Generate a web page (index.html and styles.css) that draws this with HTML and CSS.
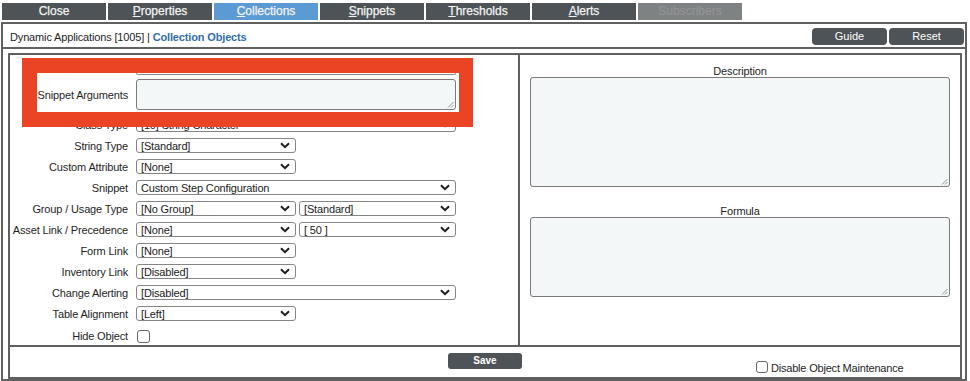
FILE: index.html
```html
<!DOCTYPE html>
<html lang="en">
<head>
<meta charset="utf-8">
<title>Collection Objects</title>
<link rel="stylesheet" href="styles.css">
</head>
<body>
<nav class="tabs">
  <div class="tab">Close</div>
  <div class="tab"><u>P</u>roperties</div>
  <div class="tab tab-active"><u>C</u>ollections</div>
  <div class="tab"><u>S</u>nippets</div>
  <div class="tab"><u>T</u>hresholds</div>
  <div class="tab"><u>A</u>lerts</div>
  <div class="tab tab-disabled">Subscribers</div>
</nav>
<section class="panel">
  <header class="panel-head">
    <div class="crumb">Dynamic Applications [1005] | <span class="crumb-strong">Collection Objects</span></div>
    <div class="head-btns">
      <div class="btn">Guide</div>
      <div class="btn">Reset</div>
    </div>
  </header>
  <div class="table">
    <div class="main">
      <div class="col-left">
        <div class="row"><span class="lbl"></span><div class="sel sel-long"></div></div>
        <div class="row"><span class="lbl"></span><div class="sel sel-long"></div></div>
        <div class="row"><span class="lbl">Class Type</span><div class="sel sel-long"><span>[10] String Character</span><svg class="chev" width="10" height="7" viewBox="0 0 10 7"><path d="M1 1.2 L5 5.2 L9 1.2" fill="none" stroke="#1d1d1d" stroke-width="2"/></svg></div></div>
        <div class="row"><span class="lbl">String Type</span><div class="sel sel-short"><span>[Standard]</span><svg class="chev" width="10" height="7" viewBox="0 0 10 7"><path d="M1 1.2 L5 5.2 L9 1.2" fill="none" stroke="#1d1d1d" stroke-width="2"/></svg></div></div>
        <div class="row"><span class="lbl">Custom Attribute</span><div class="sel sel-short"><span>[None]</span><svg class="chev" width="10" height="7" viewBox="0 0 10 7"><path d="M1 1.2 L5 5.2 L9 1.2" fill="none" stroke="#1d1d1d" stroke-width="2"/></svg></div></div>
        <div class="row"><span class="lbl">Snippet</span><div class="sel sel-long"><span>Custom Step Configuration</span><svg class="chev" width="10" height="7" viewBox="0 0 10 7"><path d="M1 1.2 L5 5.2 L9 1.2" fill="none" stroke="#1d1d1d" stroke-width="2"/></svg></div></div>
        <div class="row"><span class="lbl">Group / Usage Type</span><div class="sel sel-short"><span>[No Group]</span><svg class="chev" width="10" height="7" viewBox="0 0 10 7"><path d="M1 1.2 L5 5.2 L9 1.2" fill="none" stroke="#1d1d1d" stroke-width="2"/></svg></div><div class="sel sel-pair"><span>[Standard]</span><svg class="chev" width="10" height="7" viewBox="0 0 10 7"><path d="M1 1.2 L5 5.2 L9 1.2" fill="none" stroke="#1d1d1d" stroke-width="2"/></svg></div></div>
        <div class="row"><span class="lbl">Asset Link / Precedence</span><div class="sel sel-short"><span>[None]</span><svg class="chev" width="10" height="7" viewBox="0 0 10 7"><path d="M1 1.2 L5 5.2 L9 1.2" fill="none" stroke="#1d1d1d" stroke-width="2"/></svg></div><div class="sel sel-pair"><span>[ 50 ]</span><svg class="chev" width="10" height="7" viewBox="0 0 10 7"><path d="M1 1.2 L5 5.2 L9 1.2" fill="none" stroke="#1d1d1d" stroke-width="2"/></svg></div></div>
        <div class="row"><span class="lbl">Form Link</span><div class="sel sel-short"><span>[None]</span><svg class="chev" width="10" height="7" viewBox="0 0 10 7"><path d="M1 1.2 L5 5.2 L9 1.2" fill="none" stroke="#1d1d1d" stroke-width="2"/></svg></div></div>
        <div class="row"><span class="lbl">Inventory Link</span><div class="sel sel-short"><span>[Disabled]</span><svg class="chev" width="10" height="7" viewBox="0 0 10 7"><path d="M1 1.2 L5 5.2 L9 1.2" fill="none" stroke="#1d1d1d" stroke-width="2"/></svg></div></div>
        <div class="row"><span class="lbl">Change Alerting</span><div class="sel sel-long"><span>[Disabled]</span><svg class="chev" width="10" height="7" viewBox="0 0 10 7"><path d="M1 1.2 L5 5.2 L9 1.2" fill="none" stroke="#1d1d1d" stroke-width="2"/></svg></div></div>
        <div class="row"><span class="lbl">Table Alignment</span><div class="sel sel-short"><span>[Left]</span><svg class="chev" width="10" height="7" viewBox="0 0 10 7"><path d="M1 1.2 L5 5.2 L9 1.2" fill="none" stroke="#1d1d1d" stroke-width="2"/></svg></div></div>
        <div class="row row-check"><span class="lbl">Hide Object</span><span class="check check-hide"></span></div>

        <div class="callout">
          <div class="ghost"></div>
          <div class="callout-row">
            <span class="lbl lbl-callout">Snippet Arguments</span>
            <div class="ta ta-args"><svg class="grip" width="7" height="7" viewBox="0 0 7 7"><path d="M6.5 1 L1 6.5 M6.5 4 L4 6.5" stroke="#777" stroke-width="0.8" fill="none"/></svg></div>
          </div>
        </div>
      </div>
      <div class="col-right">
        <div class="ta-label">Description</div>
        <div class="ta ta-desc"><svg class="grip" width="7" height="7" viewBox="0 0 7 7"><path d="M6.5 1 L1 6.5 M6.5 4 L4 6.5" stroke="#777" stroke-width="0.8" fill="none"/></svg></div>
        <div class="ta-label ta-label-gap">Formula</div>
        <div class="ta ta-formula"><svg class="grip" width="7" height="7" viewBox="0 0 7 7"><path d="M6.5 1 L1 6.5 M6.5 4 L4 6.5" stroke="#777" stroke-width="0.8" fill="none"/></svg></div>
      </div>
    </div>
    <footer class="foot">
      <div></div>
      <div class="save">Save</div>
      <label class="maint"><span class="check check-maint"></span><span class="maint-text">Disable Object Maintenance</span></label>
    </footer>
  </div>
</section>
</body>
</html>
```
FILE: styles.css
```css
* { box-sizing: border-box; }
html, body { margin: 0; padding: 0; background: #ffffff; }
body {
  font-family: "Liberation Sans", Arial, Helvetica, sans-serif;
  font-size: 11px;
  letter-spacing: -0.15px;
  color: #222;
  width: 970px;
  height: 381px;
  overflow: hidden;
}

/* tabs */
.tabs {
  display: flex;
  gap: 2px;
  padding: 3px 0 0 2px;
}
.tab {
  width: 104px;
  height: 17px;
  background: #4d5356;
  color: #f4f4f4;
  font-size: 12px;
  letter-spacing: 0;
  line-height: 17px;
  text-align: center;
  -webkit-text-stroke: 0.25px #f4f4f4;
}
.tab u { text-underline-offset: 1px; }
.tab-active { background: #5b9ad3; }
.tab-disabled {
  background: #7f8283;
  color: #919496;
  -webkit-text-stroke: 0.25px #919496;
}

/* panel */
.panel {
  margin: 2px 0 0 1px;
  width: 966px;
  height: 359px;
  border: 2px solid #606060;
}
.panel-head {
  height: 25px;
  border-bottom: 2px solid #606060;
  display: flex;
  align-items: center;
  justify-content: space-between;
  padding: 2px 1px 0 7px;
}
.crumb { color: #1e1e1e; }
.crumb-strong { color: #2f6ea9; font-weight: bold; }
.head-btns { display: flex; gap: 2px; }
.btn {
  width: 75px;
  height: 17px;
  background: #4d5356;
  color: #fff;
  border-radius: 4px;
  text-align: center;
  line-height: 17px;
  font-size: 11px;
  letter-spacing: 0;
}

/* table */
.table {
  margin: 4px 3px 0 5px;
  height: 326px;
  border: 2px solid #606060;
  display: flex;
  flex-direction: column;
}
.main {
  display: flex;
  height: 292px;
  border-bottom: 2px solid #606060;
}
.col-left {
  position: relative;
  width: 510px;
  border-right: 2px solid #606060;
  padding-top: 17px;
}
.col-right {
  flex: 1;
  padding: 10px 10px 0 10px;
}

.row {
  display: flex;
  align-items: center;
  height: 21px;
  gap: 3px;
}
.lbl {
  width: 118px;
  text-align: right;
  margin-right: 5px;
  white-space: nowrap;
  color: #1e1e1e;
}
.sel {
  height: 15px;
  border: 1px solid #858585;
  border-radius: 3px;
  background: #fff;
  display: flex;
  align-items: center;
  justify-content: space-between;
  padding: 0 5px 0 4px;
  font-size: 11px;
  color: #1a1a1a;
  white-space: nowrap;
  overflow: hidden;
}
.sel-short { width: 160px; }
.sel-long { width: 320px; }
.sel-pair { width: 157px; }
.chev { flex: none; }

.row-check { padding-top: 3px; }
.check {
  display: inline-block;
  width: 13px;
  height: 13px;
  border: 1px solid #666;
  border-radius: 3px;
  background: #fff;
  flex: none;
}
.check-hide { margin-left: 1px; }

/* annotation callout laid over the form */
.callout {
  position: absolute;
  left: 12px;
  top: 3px;
  width: 451px;
  height: 69px;
  border-style: solid;
  border-color: #eb4425;
  border-width: 15px 14px 15px 15px;
  background: #fff;
}
.ghost {
  margin-left: 99px;
  width: 320px;
  height: 2px;
  border: 1px solid #8a8a8a;
  border-top: none;
  border-radius: 0 0 2px 2px;
}
.callout-row {
  display: flex;
  align-items: center;
  margin-top: 4px;
}
.lbl-callout { width: 91px; margin-right: 8px; }

/* textareas */
.ta {
  border: 1px solid #7b7b7b;
  border-radius: 3px;
  background: #f3f7f8;
  display: flex;
  align-items: flex-end;
  justify-content: flex-end;
  padding: 0 1px 1px 0;
}
.ta-args { width: 320px; height: 31px; }
.ta-desc { width: 420px; height: 110px; }
.ta-formula { width: 420px; height: 80px; }
.grip { display: block; }

.ta-label {
  text-align: center;
  line-height: 12px;
  height: 12px;
  color: #1e1e1e;
}
.ta-label-gap { margin-top: 18px; }

/* footer */
.foot {
  flex: 1;
  display: grid;
  grid-template-columns: 1fr 74px 1fr;
  align-items: start;
}
.save {
  margin-top: 6px;
  height: 16px;
  background: #4d5356;
  color: #fff;
  border-radius: 3px;
  font-size: 10px;
  font-weight: bold;
  letter-spacing: 0;
  text-align: center;
  line-height: 16px;
}
.maint {
  display: flex;
  align-items: center;
  gap: 3px;
  margin-top: 12px;
  padding-left: 234px;
  white-space: nowrap;
}
.check-maint { width: 12px; height: 12px; }
.maint-text {
  font-size: 11px;
  color: #1e1e1e;
  padding-top: 3px;
  letter-spacing: -0.2px;
}
```
